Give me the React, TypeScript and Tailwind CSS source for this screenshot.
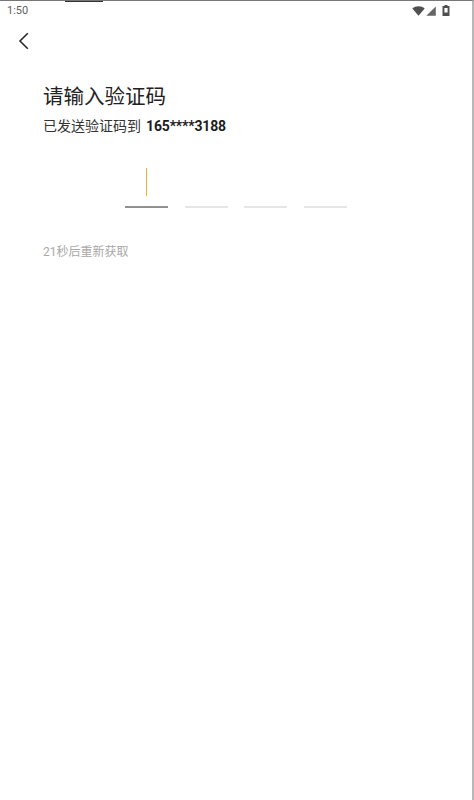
const font = "font-['Roboto','Noto_Sans_CJK_SC',sans-serif]";

export default function App() {
  return (
    <div className={`${font} relative w-[474px] h-[800px] bg-white border-r-2 border-r-[#b8b8b8] border-t border-t-[#777777] overflow-hidden`}>
      <div className="absolute top-[-1px] left-[65px] w-[38px] h-[2px] bg-[#333333]" />

      {/* status bar */}
      <div className="flex items-center justify-between h-[19px] pl-[7px] pr-[22px]">
        <span className="text-[11px] leading-[19px] text-[#5f5f5f]">1:50</span>
        <div className="flex items-center gap-[1px]">
          <svg width="13" height="10" viewBox="0 0 13 10">
            <path d="M0.3 2.4C2 1 4.2 .3 6.5 .3s4.5 .7 6.2 2.1L6.5 9.8z" fill="#505050" />
          </svg>
          <svg width="10" height="10" viewBox="0 0 10 10">
            <path d="M9.8 .5v9.3H.3z" fill="#666666" />
          </svg>
          <svg width="8" height="11" viewBox="0 0 8 11" className="ml-[5px]">
            <path fillRule="evenodd" d="M2.5 0h3v1H7.5v10H.5V1h2zM2.4 3v4.5h3.2V3z" fill="#505050" />
          </svg>
        </div>
      </div>

      {/* back */}
      <div className="h-[42px] pl-[18px] flex items-center">
        <svg width="12" height="18" viewBox="0 0 12 18" fill="none" stroke="#2a2a2a" strokeWidth="1.6">
          <path d="M9.8 1.2L2 9l7.8 7.8" />
        </svg>
      </div>

      <div className="pt-[20px] pl-[43px]">
        <h1 className="text-[20.5px] leading-[30px] font-normal text-[#222222]">请输入验证码</h1>
        <p className="mt-[3px] text-[14px] leading-[22px] text-[#333333] flex">
          已发送验证码到
          <span className="ml-[5px] font-bold tracking-[-0.15px] text-[#1c1c1c]">165****3188</span>
        </p>
      </div>

      {/* code inputs */}
      <div className="mt-[28px] pl-[125px] flex gap-[16.7px]">
        <div className="w-[43px] h-[43px] border-b-2 border-b-[#909090] flex justify-center">
          <div className="w-[1.5px] h-[28px] mt-[3px] bg-[#f0b035]" />
        </div>
        <div className="w-[43px] h-[43px] border-b-2 border-b-[#e6e6e6]" />
        <div className="w-[43px] h-[43px] border-b-2 border-b-[#e6e6e6]" />
        <div className="w-[43px] h-[43px] border-b-2 border-b-[#e6e6e6]" />
      </div>

      <p className="mt-[33px] pl-[43px] text-[12px] leading-[22px] text-[#a8a8a8]">21秒后重新获取</p>
    </div>
  );
}
